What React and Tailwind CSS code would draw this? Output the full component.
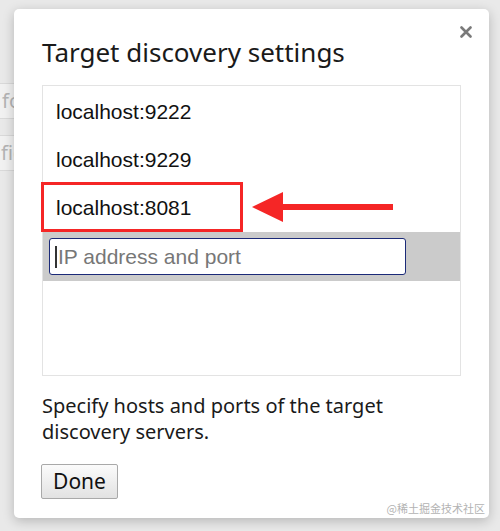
import React from "react";

const sans = { fontFamily: '"Noto Sans", "Open Sans", sans-serif' };
const arial = { fontFamily: '"Liberation Sans", Arial, sans-serif' };

function Backdrop() {
  return (
    <div className="flex flex-col w-[40px] pt-[83px] text-[#b4b4b4] text-[20px]" style={sans}>
      <div className="h-[36px] border-y border-[#d9d9d9] bg-[#f1f1f1] flex items-center pl-[2px]">fo</div>
      <div className="h-[36px] mt-[16px] border-y border-[#d9d9d9] bg-[#f1f1f1] flex items-center pl-[1px]">fig</div>
    </div>
  );
}

function Row({ children }) {
  return (
    <div className="h-[48px] flex items-center pl-[13px] text-[21px] text-[#111]" style={arial}>
      {children}
    </div>
  );
}

export default function App() {
  return (
    <div className="relative w-[500px] h-[531px] overflow-hidden bg-[#e9e9e9]">
      <Backdrop />

      <div className="absolute left-[14px] top-[9px] w-[475px] h-[509px] bg-white rounded-[5px] shadow-[0_3px_12px_rgba(0,0,0,0.22)] pl-[28px] pt-[25px]">
        <button className="absolute right-[17px] top-[17px] w-[12px] h-[12px]" aria-label="Close">
          <svg viewBox="0 0 12 12" width="12" height="12">
            <path d="M1.5 1.5 L10.5 10.5 M10.5 1.5 L1.5 10.5" stroke="#7a7a7a" strokeWidth="2.6" strokeLinecap="round" />
          </svg>
        </button>

        <div className="text-[26px] leading-[36px] text-[#1a1a1a]" style={sans}>
          Target discovery settings
        </div>

        <div className="relative mt-[15px] w-[419px] h-[291px] border border-[#e3e3e3] pt-[2px]">
          <Row>localhost:9222</Row>
          <Row>localhost:9229</Row>
          <Row>localhost:8081</Row>
          <div className="h-[49px] bg-[#cbcbcb] pl-[6px] pt-[6px]">
            <div className="w-[357px] h-[37px] bg-white border-[1.5px] border-[#1b2a78] rounded-[3px] flex items-center pl-[5px]" style={arial}>
              <span className="w-[2px] h-[22px] bg-[#333]" />
              <span className="ml-[1px] text-[21px] text-[#777]">IP address and port</span>
            </div>
          </div>

          <div className="absolute left-[-2px] top-[96px] w-[202px] h-[50px] border-[3px] border-[#f52626]" />
        </div>

        <div className="mt-[17px] text-[20px] leading-[26px] text-[#1a1a1a]" style={sans}>
          Specify hosts and ports of the target
          <br />
          discovery servers.
        </div>

        <button
          className="mt-[19px] -ml-[1px] w-[77px] h-[35px] flex items-center justify-center border border-[#a9a9a9] rounded-[2px] bg-gradient-to-b from-[#fbfbfb] to-[#e2e2e2] text-[21px] text-[#111]"
          style={sans}
        >
          Done
        </button>

        <div
          className="absolute right-[4px] bottom-[2px] text-[11px] text-[#b3b3b3]"
          style={{ fontFamily: '"Noto Sans CJK SC", "Noto Sans", sans-serif' }}
        >
          @稀土掘金技术社区
        </div>
      </div>

      <svg className="absolute left-[250px] top-[190px]" width="146" height="34" viewBox="0 0 146 34">
        <path d="M2 17 L33 2 L33 14 L143 14 L143 20 L33 20 L33 32 Z" fill="#f52626" />
      </svg>
    </div>
  );
}
